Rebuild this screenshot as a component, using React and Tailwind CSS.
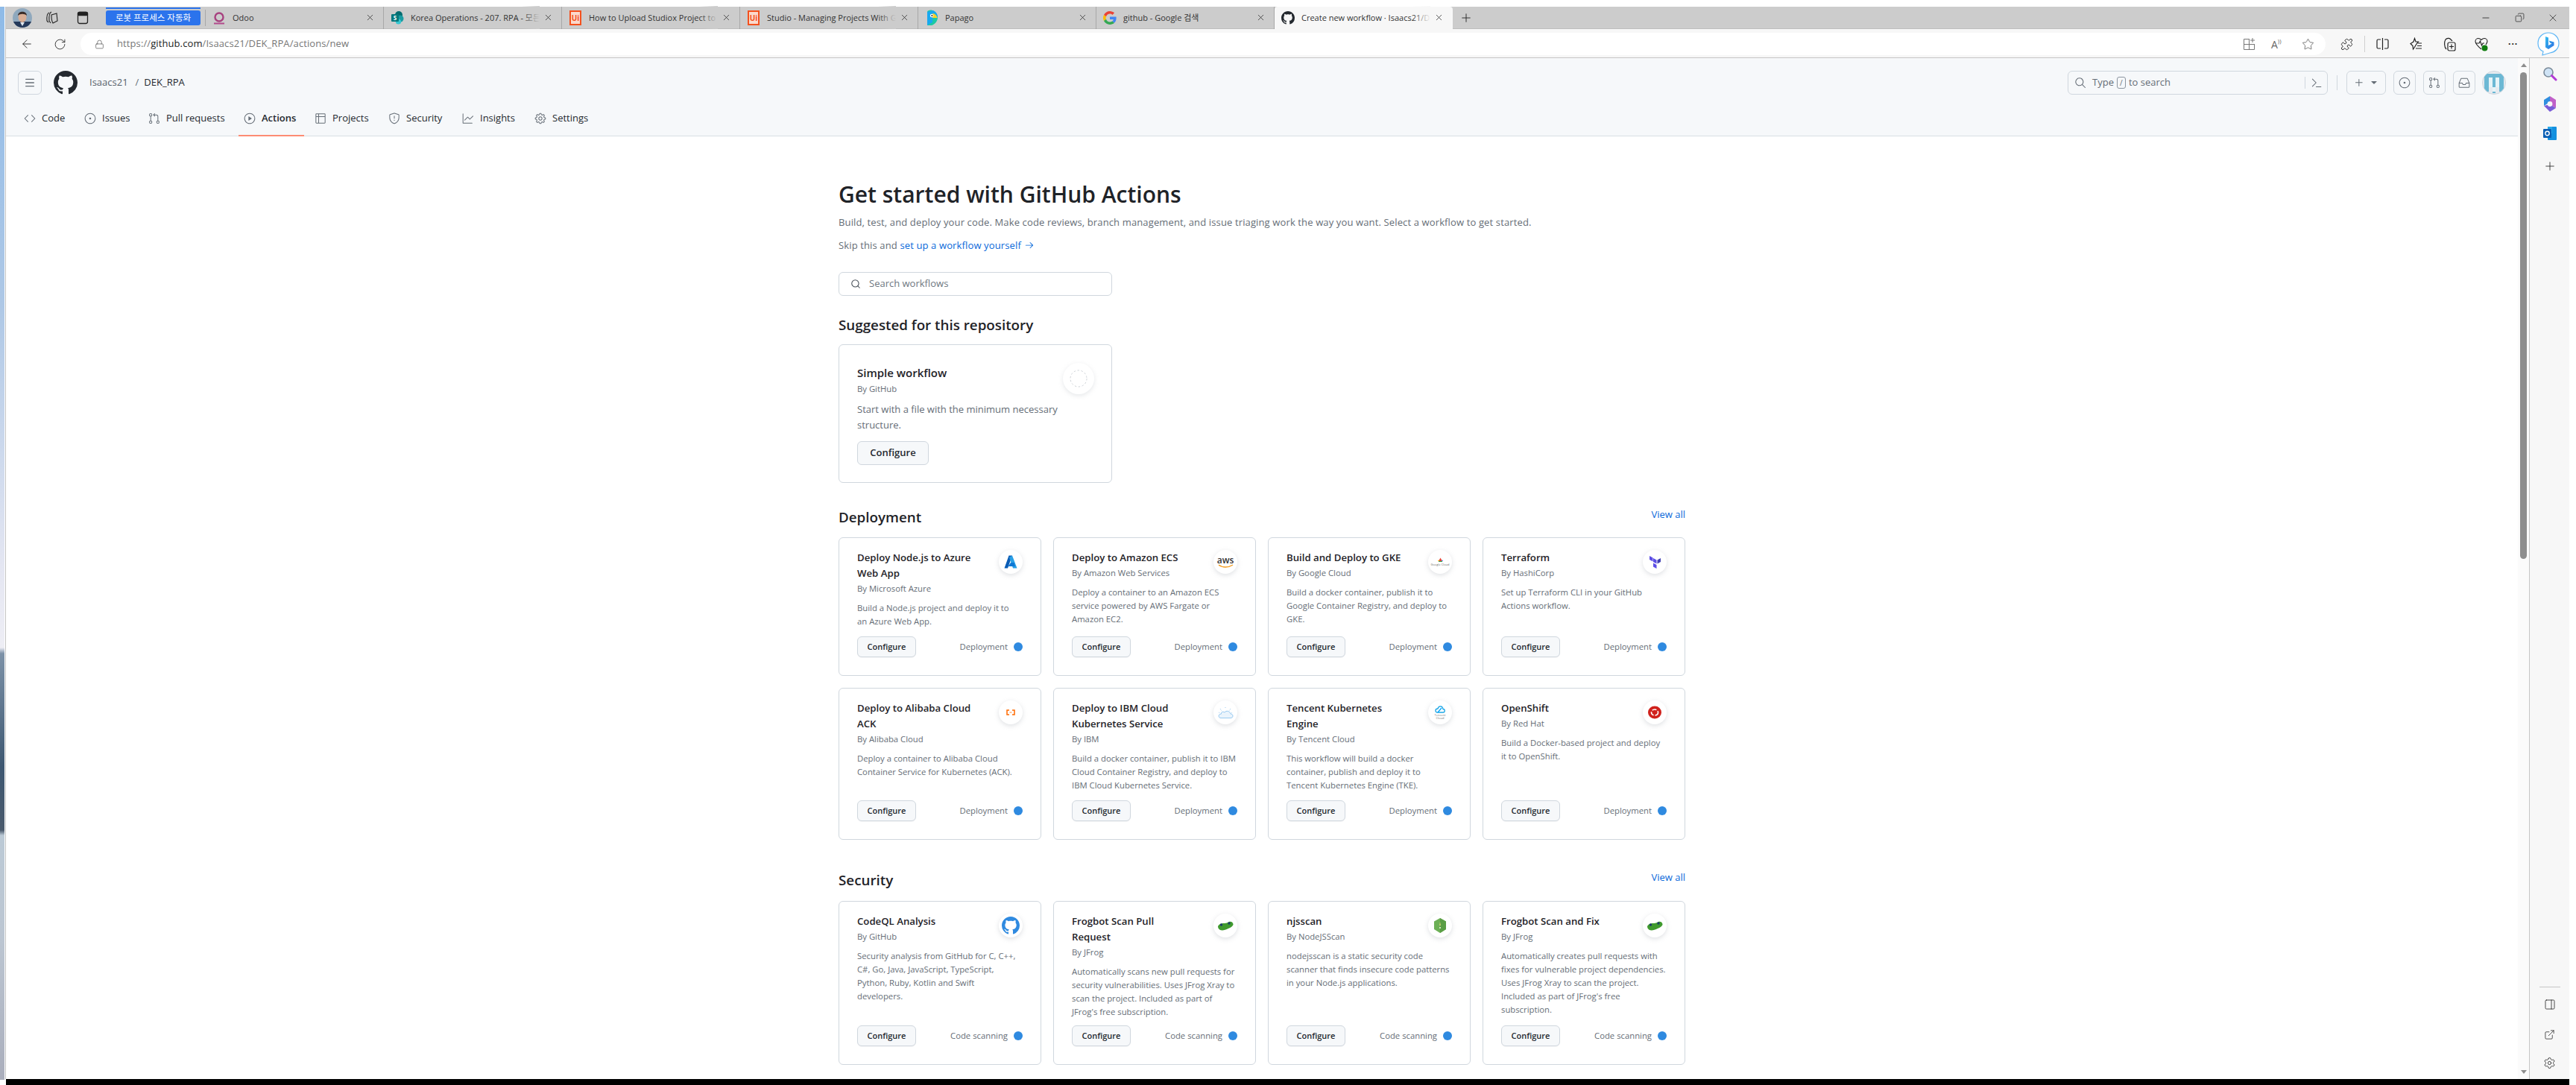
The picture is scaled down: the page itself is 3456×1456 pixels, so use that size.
import React from "react";
import {
  GoCode, GoIssueOpened, GoGitPullRequest, GoPlay, GoTable, GoShield, GoGraph, GoGear,
  GoSearch, GoPlus, GoTriangleDown, GoInbox, GoCommandPalette, GoArrowRight,
} from "react-icons/go";
import { ArrowLeft, RotateCw, Lock, Star, X, Plus, Minus, Copy, ExternalLink, Settings, PanelRight, Puzzle, Search, Menu } from "lucide-react";

const sans = "font-['Open_Sans','Noto_Sans_CJK_KR',sans-serif]";

function GoMarkGithub({ size, className }) {
  return (
    <svg width={size} height={size} viewBox="0 0 16 16" fill="currentColor" className={className}>
      <path d="M8 0c4.42 0 8 3.58 8 8a8.013 8.013 0 0 1-5.45 7.59c-.4.08-.55-.17-.55-.38 0-.27.01-1.13.01-2.2 0-.75-.25-1.23-.54-1.48 1.78-.2 3.65-.88 3.65-3.95 0-.88-.31-1.59-.82-2.15.08-.2.36-1.02-.08-2.12 0 0-.67-.22-2.2.82-.64-.18-1.32-.27-2-.27-.68 0-1.36.09-2 .27-1.53-1.03-2.2-.82-2.2-.82-.44 1.1-.16 1.92-.08 2.12-.51.56-.82 1.28-.82 2.15 0 3.06 1.86 3.75 3.64 3.95-.23.2-.44.55-.51 1.07-.46.21-1.61.55-2.33-.66-.15-.24-.6-.83-1.23-.82-.67.01-.27.38.01.53.34.19.73.9.82 1.13.16.45.68 1.31 2.69.94 0 .67.01 1.3.01 1.49 0 .21-.15.45-.55.38A7.995 7.995 0 0 1 0 8c0-4.42 3.58-8 8-8Z" />
    </svg>
  );
}

function Avatar() {
  return (
    <svg width="26" height="26" viewBox="0 0 26 26">
      <defs><clipPath id="av"><circle cx="13" cy="13" r="13" /></clipPath></defs>
      <g clipPath="url(#av)">
        <rect width="26" height="26" fill="#8fa8bd" />
        <rect y="18" width="26" height="8" fill="#25395a" />
        <path d="M10 19 L13 24 L16 19 Z" fill="#dfe6ee" />
        <ellipse cx="13" cy="12" rx="5.5" ry="7" fill="#d9ae95" />
        <path d="M7 10 C7 3 19 3 19 10 C16 7 10 7 7 10Z" fill="#3a2c28" />
      </g>
    </svg>
  );
}

function OdooIcon() {
  return (
    <svg width="18" height="18" viewBox="0 0 18 18">
      <circle cx="9" cy="8" r="5.5" fill="none" stroke="#a7417f" strokeWidth="2.4" />
      <rect x="2" y="15.5" width="14" height="2" fill="#b24a8c" />
    </svg>
  );
}
function SharePointIcon() {
  return (
    <svg width="17" height="18" viewBox="0 0 17 18">
      <circle cx="10" cy="5" r="5" fill="#036c70" />
      <circle cx="12" cy="10" r="4.5" fill="#1a9ba1" />
      <circle cx="9.5" cy="14" r="3.6" fill="#37c6d0" />
      <rect x="0" y="4" width="10" height="10" rx="1" fill="#03787c" />
      <text x="5" y="12" textAnchor="middle" fontSize="8" fontWeight="700" fill="#fff" fontFamily="Open Sans">S</text>
    </svg>
  );
}
function UiIcon() {
  return (
    <div className="w-[16px] h-[20px] bg-[#fbd9cc] border-2 border-[#f4511e] flex items-center justify-center text-[10px] leading-none font-bold text-[#f4511e]">Ui</div>
  );
}
function PapagoIcon() {
  return (
    <svg width="16" height="22" viewBox="0 0 16 22">
      <path d="M2 3 C2 1 6 0 9 1 C14 2 16 7 16 11 C16 15 12 20 8 21 L2 21Z" fill="#1cc9a4" />
      <path d="M2 3 L9 1 C14 2 16 7 16 10 L9 12 L9 17 L2 21Z" fill="#17a8f0" />
      <path d="M9 5 C12 5 15 8 15.5 11 L9 11Z" fill="#f5d329" />
      <circle cx="8" cy="8" r="2.2" fill="#fff" />
      <circle cx="8.4" cy="8" r="1" fill="#222" />
    </svg>
  );
}
function GoogleIcon() {
  return (
    <svg width="18" height="22" viewBox="0 0 48 48">
      <path fill="#EA4335" d="M24 9.5c3.5 0 6.7 1.2 9.2 3.6l6.9-6.9C35.9 2.4 30.5 0 24 0 14.6 0 6.5 5.4 2.6 13.2l8 6.2C12.5 13.7 17.8 9.5 24 9.5z" />
      <path fill="#4285F4" d="M47 24.5c0-1.6-.1-3.1-.4-4.5H24v9h13c-.6 3-2.3 5.5-4.8 7.2l7.7 6C44.4 37.9 47 31.8 47 24.5z" />
      <path fill="#FBBC05" d="M10.5 28.6c-.5-1.4-.8-3-.8-4.6s.3-3.2.8-4.6l-8-6.2C.9 16.5 0 20.1 0 24s.9 7.5 2.6 10.8l7.9-6.2z" />
      <path fill="#34A853" d="M24 48c6.5 0 11.9-2.1 15.9-5.8l-7.7-6c-2.1 1.4-4.9 2.3-8.2 2.3-6.2 0-11.5-4.2-13.4-9.9l-8 6.2C6.5 42.6 14.6 48 24 48z" />
    </svg>
  );
}

const tabs = [
  { label: "Odoo", icon: <OdooIcon /> },
  { label: "Korea Operations - 207. RPA - 모든 문서", icon: <SharePointIcon />, fade: true },
  { label: "How to Upload Studiox Project to Orchestrator", icon: <UiIcon />, fade: true },
  { label: "Studio - Managing Projects With GIT", icon: <UiIcon />, fade: true },
  { label: "Papago", icon: <PapagoIcon /> },
  { label: "github - Google 검색", icon: <GoogleIcon /> },
];

function Tab({ t, active }) {
  return (
    <div className={`h-[30px] w-[239px] shrink-0 flex items-center relative ${active ? "bg-[#f7f7f7] rounded-t-[4px]" : "border-r border-[#8f8f8f]/60"}`}>
      <div className="w-[18px] ml-[9px] flex justify-center items-center shrink-0">{t.icon}</div>
      <div className="ml-[9px] w-[173px] relative overflow-hidden whitespace-nowrap text-[11px] leading-[30px] pt-[1px] text-[#333]">
        {t.label}
        {t.fade && <div className={`absolute right-0 top-0 bottom-0 w-[24px] bg-gradient-to-r from-transparent ${active ? "to-[#f7f7f7]" : "to-[#cccccc]"}`} />}
      </div>
      <X size={13} strokeWidth={1.3} className="text-[#222] ml-[5px] shrink-0" />
    </div>
  );
}

function Bing() {
  return (
    <svg width="30" height="32" viewBox="0 0 30 32">
      <defs>
        <linearGradient id="bg1" x1="0" y1="0" x2="1" y2="1"><stop offset="0" stopColor="#36bdf0" /><stop offset="1" stopColor="#2a6ee0" /></linearGradient>
      </defs>
      <path d="M15 1 C23 1 29 7 29 15 C29 22 24 27 17 28 L7 31 L8 26 C3 24 1 20 1 15 C1 7 7 1 15 1Z" fill="#fff" stroke="#5cb5f5" strokeWidth="1.2" />
      <path d="M11 6 L15 7.5 L15 18 L19.5 15.5 L17 14.5 L15.8 11.5 L22.5 13.6 L22.5 18 L15 23 L11 20.5Z" fill="url(#bg1)" />
    </svg>
  );
}

function TopBar() {
  return (
    <div className="h-[30px] bg-[#cccccc] border-b border-[#bdbdbd] flex items-center shrink-0">
      <div className="w-[134px] shrink-0 flex items-center">
        <div className="ml-[9px]"><Avatar /></div>
        <svg className="ml-[18px]" width="18" height="20" viewBox="0 0 18 20" fill="none" stroke="#222" strokeWidth="1.1">
          <path d="M5 3 C2 4 1.5 8 2 14 L4 16" /><path d="M8 2 C5 3 4.5 7 5 14 L7 17" />
          <path d="M8 6 L15 4 L16 14 L10 17 C8 14 8 10 8 6Z" />
        </svg>
        <svg className="ml-[24px]" width="16" height="18" viewBox="0 0 16 18" fill="none" stroke="#222" strokeWidth="1.3">
          <rect x="1.5" y="1.5" width="13" height="15" rx="2.5" /><rect x="1.5" y="1.5" width="13" height="4" rx="1.5" fill="#222" />
        </svg>
      </div>
      <div className="w-[127px] h-[20px] bg-[#2b73ec] rounded-[3px] shrink-0 flex items-center justify-center text-white text-[11.5px] relative">
        로봇 프로세스 자동화
        <div className="absolute left-0 right-0 top-[-4px] h-[2px] bg-[#2b73ec]" />
      </div>
      <div className="w-[7px] h-[22px] border-r border-[#8f8f8f]/60 shrink-0" />
      {tabs.map((t) => <Tab key={t.label} t={t} />)}
      <Tab t={{ label: "Create new workflow · Isaacs21/DEK_RPA", icon: <GoMarkGithub size={18} className="text-[#24292f]" />, fade: true }} active />
      <Plus size={18} strokeWidth={1.2} className="ml-[9px] text-[#222]" />
      <div className="flex-1" />
      <Minus size={14} strokeWidth={1.4} className="text-[#222]" />
      <Copy size={13} strokeWidth={1.3} className="ml-[32px] text-[#222] -scale-x-100" />
      <X size={16} strokeWidth={1.1} className="ml-[30px] mr-[14px] text-[#222]" />
    </div>
  );
}

function Toolbar() {
  return (
    <div className="h-[39px] bg-[#f7f7f7] border-b border-[#c6c6c6] flex items-center shrink-0 pt-[2px]">
      <ArrowLeft size={18} strokeWidth={1.2} className="ml-[19px] text-[#222]" />
      <RotateCw size={17} strokeWidth={1.2} className="ml-[27px] text-[#222]" />
      <div className="ml-[19px] w-[3012px] h-[30px] bg-white rounded-full flex items-center shrink-0">
        <Lock size={13} strokeWidth={1.3} className="ml-[19px] text-[#555]" />
        <span className="ml-[17px] text-[13px] tracking-[0.1px] text-[#777]">https://<span className="text-[#222]">github.com</span>/Isaacs21/DEK_RPA/actions/new</span>
        <div className="flex-1" />
        <svg width="17" height="18" viewBox="0 0 17 18" fill="none" stroke="#777" strokeWidth="1">
          <path d="M9 2.5 H1.5 V16.5 H15.5 V9" /><path d="M1.5 9.5 H15.5 M8.5 2.5 V16.5" /><path d="M13 1 V7 M10 4 H16" />
        </svg>
        <span className="ml-[21px] text-[14px] text-[#666] w-[18px]">A<span className="text-[8px] align-top">))</span></span>
        <Star size={17} strokeWidth={1.1} className="ml-[23px] text-[#555] mr-[15px]" />
      </div>
      <Puzzle size={17} strokeWidth={1.3} className="ml-[20px] text-[#222]" />
      <div className="ml-[15px] w-px h-[22px] bg-[#d0d0d0]" />
      <svg className="ml-[15px]" width="17" height="18" viewBox="0 0 17 18" fill="none" stroke="#222" strokeWidth="1.2">
        <path d="M6 3 H2.5 C1.7 3 1 3.7 1 4.5 V13.5 C1 14.3 1.7 15 2.5 15 H6" /><path d="M11 3 H14.5 C15.3 3 16 3.7 16 4.5 V13.5 C16 14.3 15.3 15 14.5 15 H11" /><path d="M8.5 1 V17" />
      </svg>
      <svg className="ml-[28px]" width="17" height="18" viewBox="0 0 17 18" fill="none" stroke="#222" strokeWidth="1.2">
        <path d="M6.5 1.5 L8 6 L11.5 6 L9 9 L6 14 L4.5 16 L4 11.5 L1 8.5 L5 6Z" /><path d="M11 8 H16 M10 11.5 H16 M8 15 H16" />
      </svg>
      <svg className="ml-[28px]" width="18" height="19" viewBox="0 0 18 19" fill="none" stroke="#222" strokeWidth="1.2">
        <path d="M4 16 C1 13 1 6 3 3 C5 1 8 1 9 2 L12 5" /><rect x="6" y="7" width="10" height="11" rx="2" /><path d="M11 9.5 V15.5 M8 12.5 H14" />
      </svg>
      <svg className="ml-[24px]" width="18" height="19" viewBox="0 0 18 19" fill="none" stroke="#222" strokeWidth="1.1">
        <path d="M9 16 C3 11 1 8 1 5.5 C1 3 3 1.5 5 1.5 C7 1.5 8 2.5 9 3.5 C10 2.5 11 1.5 13 1.5 C15 1.5 17 3 17 5.5 C17 7 16 8 15 10" />
        <path d="M2 8 H6 L7.5 5 L9.5 11 L11 8 H13" /><circle cx="13.5" cy="14.5" r="4" fill="#107c10" stroke="none" />
      </svg>
      <div className="ml-[27px] text-[#222] text-[12px] font-bold tracking-[1px] leading-none w-[16px]">···</div>
      <div className="ml-[23px]"><Bing /></div>
    </div>
  );
}

const navItems = [
  { label: "Code", Icon: GoCode, w: "w-[81px]" },
  { label: "Issues", Icon: GoIssueOpened, w: "w-[86px]" },
  { label: "Pull requests", Icon: GoGitPullRequest, w: "w-[128px]" },
  { label: "Actions", Icon: GoPlay, w: "w-[95px]", active: true },
  { label: "Projects", Icon: GoTable, w: "w-[99px]" },
  { label: "Security", Icon: GoShield, w: "w-[99px]" },
  { label: "Insights", Icon: GoGraph, w: "w-[97px]" },
  { label: "Settings", Icon: GoGear, w: "w-[97px]" },
];

function GhHeader() {
  return (
    <div className="h-[105px] bg-[#f6f8fa] border-b border-[#d8dee4] shrink-0 flex flex-col">
      <div className="flex items-center h-[32px] mt-[17px] pl-[16px] pr-[16px]">
        <div className="w-[32px] h-[32px] rounded-[6px] border border-[#d0d7de] flex items-center justify-center shrink-0">
          <Menu size={16} className="text-[#656d76]" />
        </div>
        <GoMarkGithub size={32} className="ml-[16px] text-[#24292f]" />
        <span className="ml-[16px] text-[13px] text-[#57606a]">Isaacs21</span>
        <span className="ml-[10px] text-[13px] text-[#656d76]">/</span>
        <span className="ml-[7px] text-[13px] text-[#24292f]">DEK_RPA</span>
        <div className="flex-1" />
        <div className="w-[349px] h-[32px] rounded-[6px] border border-[#d0d7de] flex items-center pl-[8px] shrink-0">
          <GoSearch size={16} className="text-[#656d76]" />
          <span className="ml-[8px] text-[13px] text-[#656d76]">Type</span>
          <span className="ml-[4px] w-[12px] h-[16px] border border-[#8c959f] rounded-[3px] text-[10px] leading-[14px] text-center text-[#656d76]">/</span>
          <span className="ml-[4px] text-[13px] text-[#656d76]">to search</span>
          <div className="flex-1" />
          <div className="w-px h-[16px] bg-[#d0d7de]" />
          <GoCommandPalette size={16} className="ml-[7px] mr-[6px] text-[#656d76]" />
        </div>
        <div className="ml-[12px] w-px h-[20px] bg-[#d0d7de]" />
        <div className="ml-[12px] w-[53px] h-[32px] rounded-[6px] border border-[#d0d7de] flex items-center justify-center gap-[5px]">
          <GoPlus size={16} className="text-[#656d76]" />
          <GoTriangleDown size={14} className="text-[#656d76]" />
        </div>
        {[GoIssueOpened, GoGitPullRequest, GoInbox].map((I, i) => (
          <div key={i} className="ml-[10px] w-[30px] h-[32px] rounded-[6px] border border-[#d0d7de] flex items-center justify-center">
            <I size={16} className="text-[#656d76]" />
          </div>
        ))}
        <div className="ml-[9px] w-[32px] h-[32px] rounded-full overflow-hidden border border-[#d0d7de] bg-[#e6eaef] shrink-0">
          <svg width="30" height="30" viewBox="0 0 30 30">
            <rect x="2" y="3" width="26" height="18" fill="#6cb8d4" />
            <rect x="2" y="3" width="6" height="24" fill="#6cb8d4" />
            <rect x="22" y="3" width="6" height="24" fill="#6cb8d4" />
            <rect x="13" y="3" width="4" height="26" fill="#6cb8d4" />
            <rect x="8" y="8" width="5" height="13" fill="#e6f4f8" />
            <rect x="17" y="8" width="5" height="13" fill="#e6f4f8" />
            <rect x="13" y="21" width="4" height="6" fill="#e6f4f8" />
          </svg>
        </div>
      </div>
      <div className="flex-1 flex pl-[24px]">
        {navItems.map(({ label, Icon, w, active }) => (
          <div key={label} className={`${w} shrink-0 h-full relative flex items-center pt-[8px]`}>
            <Icon size={16} className="text-[#656d76] shrink-0" />
            <span className={`ml-[8px] text-[13px] ${active ? "font-semibold text-[#24292f]" : "text-[#24292f]"}`}>{label}</span>
            {active && <div className="absolute left-[-7px] w-[88px] bottom-[-1px] h-[2px] bg-[#fd8c73]" />}
          </div>
        ))}
      </div>
    </div>
  );
}

/* card logos */
const logos = {
  dashed: (
    <svg width="24" height="24" viewBox="0 0 24 24"><circle cx="12" cy="12" r="11" fill="none" stroke="#c4c9cf" strokeWidth="0.8" strokeDasharray="2.5 2.5" /></svg>
  ),
  azure: (
    <svg width="18" height="18" viewBox="0 0 18 18">
      <path d="M6.5 0.5 H11 L5 17.5 H0.5Z" fill="#0a5cb5" />
      <path d="M11 0.5 L17.5 17.5 H12 L7 3Z" fill="#2aa0e6" />
      <path d="M9 10 H13.5 L15 15 H5.5Z" fill="#0f78d4" />
    </svg>
  ),
  aws: (
    <div className="flex flex-col items-center leading-none">
      <span className="text-[12px] font-semibold text-[#333] leading-[11px]">aws</span>
      <svg width="21" height="6" viewBox="0 0 21 6"><path d="M1 1 C6 5 14 5 20 1" fill="none" stroke="#f49a1a" strokeWidth="1.3" /></svg>
    </div>
  ),
  alibaba: (
    <svg width="12" height="8" viewBox="0 0 12 8" fill="none" stroke="#ff6a00" strokeWidth="1.5">
      <path d="M4 1 H1 V7 H4" /><path d="M8 1 H11 V7 H8" /><path d="M4.5 4 H7.5" strokeWidth="0.8" />
    </svg>
  ),
  ibm: (
    <svg width="21" height="17" viewBox="0 0 21 17" fill="none" stroke="#5aa9e8" strokeWidth="0.6">
      <path d="M4 15.5 H17 C21 15.5 21 10 17 10 C16 6 11 5 9 8 C6 6 4 8 4.5 10 C0 10 0 15.5 4 15.5Z" fill="#eaf4fc" />
      <path d="M3 3 L5 6 M10 1 V3 M17 3 L15 6 M1 8 L3 9 M19 8 L18 9" strokeDasharray="1 1" />
    </svg>
  ),
  gcloud: (
    <div className="flex flex-col items-center">
      <svg width="7" height="6" viewBox="0 0 7 6">
        <path d="M1 5 L3.5 0.5 L6 5Z" fill="#ea4335" /><path d="M1 5 H6 V6 H1Z" fill="#34a853" /><path d="M5 5 L6 3 L7 5Z" fill="#4285f4" /><path d="M0 5 L1 3 L2 5Z" fill="#fbbc05" />
      </svg>
      <span className="text-[4px] leading-[6px] mt-[1px] text-[#666] whitespace-nowrap">Google Cloud</span>
    </div>
  ),
  terraform: (
    <svg width="15" height="18" viewBox="0 0 15 18">
      <path d="M0 1 L4.5 3.5 V8.5 L0 6Z" fill="#5c4ee5" /><path d="M5 4 L9.5 6.5 V11.5 L5 9Z" fill="#5c4ee5" />
      <path d="M5 10.5 L9.5 13 V18 L5 15.5Z" fill="#5c4ee5" /><path d="M10.5 6.5 L15 4 V9 L10.5 11.5Z" fill="#4040b2" />
    </svg>
  ),
  tencent: (
    <div className="flex flex-col items-center">
      <svg width="14" height="11" viewBox="0 0 14 11" fill="none" stroke="#1ba6e5" strokeWidth="1.3">
        <path d="M3.5 10 H11 C14 10 14 5.5 11 5.5 C10.5 1 5 0.5 4 5 C0 5 0 10 3.5 10Z" /><path d="M4 10 L9 4" stroke="#00a4ff" />
      </svg>
      <span className="text-[4px] leading-[4px] mt-[1px] text-[#777] text-center whitespace-pre-line">Tencent{"\n"}Cloud</span>
    </div>
  ),
  openshift: (
    <svg width="20" height="18" viewBox="0 0 20 18">
      <ellipse cx="10" cy="9" rx="9" ry="8.5" fill="#d0211c" />
      <ellipse cx="10" cy="9" rx="4.5" ry="4" fill="none" stroke="#fff" strokeWidth="1.6" strokeDasharray="6 2" />
    </svg>
  ),
  ghblue: <div className="w-[24px] h-[24px] flex items-center justify-center"><GoMarkGithub size={24} className="text-[#2f8ae0]" /></div>,
  frog: (
    <svg width="21" height="13" viewBox="0 0 21 13">
      <path d="M0 7 C2 3 6 3 9 3 C11 3 13 2 15 1 C17 0 20 1 20.5 4 C21 6 17 9 14 10 C10 12 6 13 3 12 C1 11 0 9 0 7Z" fill="#3f9a2e" />
      <circle cx="4.5" cy="5" r="1.7" fill="#1b3d6d" /><circle cx="15" cy="3" r="1.7" fill="#1b3d6d" />
    </svg>
  ),
  njs: (
    <svg width="16" height="20" viewBox="0 0 16 20">
      <path d="M8 0 L16 4.5 V15 L8 20 L0 15 V4.5Z" fill="#6cb055" /><path d="M8 0 L16 4.5 V15 L8 20Z" fill="#5a9e45" />
      <path d="M8 5 L8.8 10 H7.2Z" fill="#e8e07a" /><rect x="7" y="12" width="2" height="2" fill="#cfe5c0" />
    </svg>
  ),
};

function Card({ title, by, desc, logo, cat, tight }) {
  return (
    <div className="border border-[#d0d7de] rounded-[6px] bg-white pt-[16px] pb-[24px] px-[24px] flex flex-col">
      <div className="flex justify-between items-start">
        <div className="min-w-0">
          <div className="text-[13.2px] leading-[21px] font-semibold text-[#1f2328] whitespace-pre-line">{title}</div>
          <div className="text-[11.3px] leading-[20px] text-[#656d76] mb-[7px]">By {by}</div>
        </div>
        <div className="w-[32px] h-[32px] rounded-full bg-white shadow-[0_2px_6px_rgba(140,149,159,0.28)] flex items-center justify-center shrink-0">
          {logos[logo]}
        </div>
      </div>
      <div className={`text-[11.3px] leading-[18px] text-[#656d76] whitespace-pre-line ${tight ? "mb-[9px]" : "mb-[11px]"}`}>{desc}</div>
      <div className="mt-auto flex items-center justify-between">
        <div className="w-[79px] h-[28px] rounded-[6px] border border-[#d0d7de] bg-[#f6f8fa] shadow-[0_1px_0_rgba(31,35,40,0.04)] flex items-center justify-center text-[11px] font-semibold text-[#24292f]">Configure</div>
        <div className="flex items-center">
          <span className="text-[11.3px] text-[#656d76]">{cat}</span>
          <div className="ml-[8px] w-[12px] h-[12px] rounded-full bg-[#2f8ae0]" />
        </div>
      </div>
    </div>
  );
}

const deployment = [
  { title: "Deploy Node.js to Azure\nWeb App", by: "Microsoft Azure", desc: "Build a Node.js project and deploy it to\nan Azure Web App.", logo: "azure" },
  { title: "Deploy to Amazon ECS", by: "Amazon Web Services", desc: "Deploy a container to an Amazon ECS\nservice powered by AWS Fargate or\nAmazon EC2.", logo: "aws" },
  { title: "Build and Deploy to GKE", by: "Google Cloud", desc: "Build a docker container, publish it to\nGoogle Container Registry, and deploy to\nGKE.", logo: "gcloud" },
  { title: "Terraform", by: "HashiCorp", desc: "Set up Terraform CLI in your GitHub\nActions workflow.", logo: "terraform" },
  { title: "Deploy to Alibaba Cloud\nACK", by: "Alibaba Cloud", desc: "Deploy a container to Alibaba Cloud\nContainer Service for Kubernetes (ACK).", logo: "alibaba" },
  { title: "Deploy to IBM Cloud\nKubernetes Service", by: "IBM", desc: "Build a docker container, publish it to IBM\nCloud Container Registry, and deploy to\nIBM Cloud Kubernetes Service.", logo: "ibm" },
  { title: "Tencent Kubernetes\nEngine", by: "Tencent Cloud", desc: "This workflow will build a docker\ncontainer, publish and deploy it to\nTencent Kubernetes Engine (TKE).", logo: "tencent" },
  { title: "OpenShift", by: "Red Hat", desc: "Build a Docker-based project and deploy\nit to OpenShift.", logo: "openshift" },
];
const security = [
  { title: "CodeQL Analysis", by: "GitHub", desc: "Security analysis from GitHub for C, C++,\nC#, Go, Java, JavaScript, TypeScript,\nPython, Ruby, Kotlin and Swift\ndevelopers.", logo: "ghblue" },
  { title: "Frogbot Scan Pull\nRequest", by: "JFrog", desc: "Automatically scans new pull requests for\nsecurity vulnerabilities. Uses JFrog Xray to\nscan the project. Included as part of\nJFrog's free subscription.", logo: "frog" },
  { title: "njsscan", by: "NodeJSScan", desc: "nodejsscan is a static security code\nscanner that finds insecure code patterns\nin your Node.js applications.", logo: "njs" },
  { title: "Frogbot Scan and Fix", by: "JFrog", desc: "Automatically creates pull requests with\nfixes for vulnerable project dependencies.\nUses JFrog Xray to scan the project.\nIncluded as part of JFrog's free\nsubscription.", logo: "frog" },
];

function Section({ name, items, cat, top, tight, gap }) {
  return (
    <div className={top}>
      <div className={`flex justify-between items-start h-[24px] ${gap}`}>
        <div className="text-[18.8px] leading-[24px] font-semibold text-[#1f2328]">{name}</div>
        <div className="text-[13px] leading-[18px] text-[#0969da] -mt-[1px]">View all</div>
      </div>
      <div className="grid grid-cols-4 gap-[16px]">
        {items.map((c) => <Card key={c.title} {...c} cat={cat} tight={tight} />)}
      </div>
    </div>
  );
}

function Main() {
  return (
    <div className="flex-1 min-w-0 overflow-hidden bg-white">
      <div className="w-[1136px] mx-auto">
        <h1 className="mt-[58px] text-[30px] leading-[40px] font-semibold text-[#1f2328]">Get started with GitHub Actions</h1>
        <p className="mt-[7px] text-[13px] tracking-[0.13px] leading-[20px] text-[#656d76]">Build, test, and deploy your code. Make code reviews, branch management, and issue triaging work the way you want. Select a workflow to get started.</p>
        <p className="mt-[11px] text-[13px] tracking-[0.13px] leading-[20px] text-[#656d76] flex items-center">Skip this and&nbsp;<span className="text-[#0969da]">set up a workflow yourself</span><GoArrowRight size={14} className="ml-[4px] text-[#0969da]" /></p>
        <div className="mt-[26px] w-[367px] h-[32px] rounded-[6px] border border-[#d0d7de] flex items-center pl-[15px]">
          <Search size={14} strokeWidth={1.8} className="text-[#424a53]" />
          <span className="ml-[11px] text-[13px] text-[#6e7781]">Search workflows</span>
        </div>
        <div className="mt-[27px] text-[18.8px] leading-[24px] font-semibold text-[#1f2328]">Suggested for this repository</div>
        <div className="mt-[14px] w-[367px] h-[186px] border border-[#d0d7de] rounded-[6px] pl-[24px] pr-[23px] pt-[27px] flex flex-col">
          <div className="flex justify-between">
            <div>
              <div className="text-[15px] leading-[21px] font-semibold text-[#1f2328]">Simple workflow</div>
              <div className="text-[11.3px] leading-[21px] text-[#656d76]">By GitHub</div>
            </div>
            <div className="w-[42px] h-[42px] -mt-[3px] rounded-full bg-white shadow-[0_2px_6px_rgba(140,149,159,0.22)] flex items-center justify-center">{logos.dashed}</div>
          </div>
          <div className="text-[13px] leading-[21px] text-[#656d76] mt-[7px] mb-[11px] whitespace-pre-line">{"Start with a file with the minimum necessary\nstructure."}</div>
          <div className="w-[96px] h-[32px] rounded-[6px] border border-[#d0d7de] bg-[#f6f8fa] flex items-center justify-center text-[13px] font-semibold text-[#24292f]">Configure</div>
        </div>
        <Section name="Deployment" items={deployment} cat="Deployment" top="mt-[34px]" gap="mb-[15px]" />
        <Section name="Security" items={security} cat="Code scanning" top="mt-[42px]" gap="mb-[16px]" tight />
      </div>
    </div>
  );
}

function Scrollbar() {
  return (
    <div className="w-[15px] shrink-0 bg-[#fbfbfb] flex flex-col items-center relative">
      <div className="mt-[7px] w-0 h-0 border-l-[4px] border-r-[4px] border-b-[5px] border-l-transparent border-r-transparent border-b-[#8e8e8e]" />
      <div className="mt-[7px] w-[9px] h-[653px] rounded-full bg-[#8e8e8e]" />
      <div className="mt-auto mb-[7px] w-0 h-0 border-l-[4px] border-r-[4px] border-t-[5px] border-l-transparent border-r-transparent border-t-[#8e8e8e]" />
    </div>
  );
}

function Sidebar() {
  return (
    <div className="w-[54px] shrink-0 bg-[#f7f7f7] border-l border-[#c6c6c6] flex flex-col items-center">
      <svg className="mt-[11px]" width="20" height="20" viewBox="0 0 20 20" fill="none">
        <circle cx="8" cy="8" r="6" fill="#cfe3f5" stroke="#7a8a99" strokeWidth="1.6" />
        <path d="M12.5 12.5 L18 18" stroke="#b23ad6" strokeWidth="3" strokeLinecap="round" />
      </svg>
      <svg className="mt-[20px]" width="18" height="22" viewBox="0 0 18 22">
        <path d="M9 0 L17 5 V16 L9 11Z" fill="#c060c8" /><path d="M9 0 L1 5 V13 L9 8Z" fill="#2f8fe0" />
        <path d="M1 13 L9 21 L17 16 L9 11Z" fill="#7a5cd8" /><circle cx="9" cy="10.5" r="3.4" fill="#f7f7f7" />
      </svg>
      <svg className="mt-[17px]" width="18" height="22" viewBox="0 0 18 22">
        <rect x="6" y="2" width="12" height="18" rx="1" fill="#1490df" /><rect x="6" y="2" width="6" height="9" fill="#28a8ea" />
        <rect x="0" y="5" width="11" height="12" rx="1" fill="#0a5fb4" /><circle cx="5.5" cy="11" r="2.7" fill="none" stroke="#fff" strokeWidth="1.4" />
      </svg>
      <Plus size={18} strokeWidth={1.1} className="mt-[24px] text-[#222]" />
      <div className="flex-1" />
      <div className="w-[28px] h-px bg-[#c6c6c6]" />
      <PanelRight size={16} strokeWidth={1.2} className="mt-[15px] text-[#222]" />
      <ExternalLink size={15} strokeWidth={1.2} className="mt-[25px] text-[#222] " />
      <Settings size={17} strokeWidth={1.2} className="mt-[22px] mb-[13px] text-[#222]" />
    </div>
  );
}

export default function App() {
  return (
    <div className={`w-[3456px] h-[1456px] overflow-hidden bg-white flex flex-col ${sans}`}>
      <div className="h-[9px] shrink-0" />
      <div className="flex-1 min-h-0 flex">
        <div className="w-[7px] shrink-0 flex">
          <div className="w-[6px] h-full bg-[linear-gradient(to_bottom,#8fbbe8_0px,#aec8e6_400px,#e4e6f2_750px,#eeeef5_860px,#7d92a8_868px,#3e5872_1020px,#4a5a6c_1105px,#bccad6_1112px,#bcc6d2_1250px,#aaaebc_1440px,#ffffff_1440px)]" />
        </div>
        <div className="w-px shrink-0 bg-[#c4c4c4] mb-[8px]" />
        <div className="w-[3439px] shrink-0 flex flex-col min-h-0">
          <TopBar />
          <Toolbar />
          <div className="flex-1 min-h-0 flex">
            <div className="flex-1 min-w-0 flex flex-col">
              <GhHeader />
              <Main />
            </div>
            <Scrollbar />
            <Sidebar />
          </div>
          <div className="h-[8px] bg-black shrink-0" />
        </div>
      </div>
    </div>
  );
}
